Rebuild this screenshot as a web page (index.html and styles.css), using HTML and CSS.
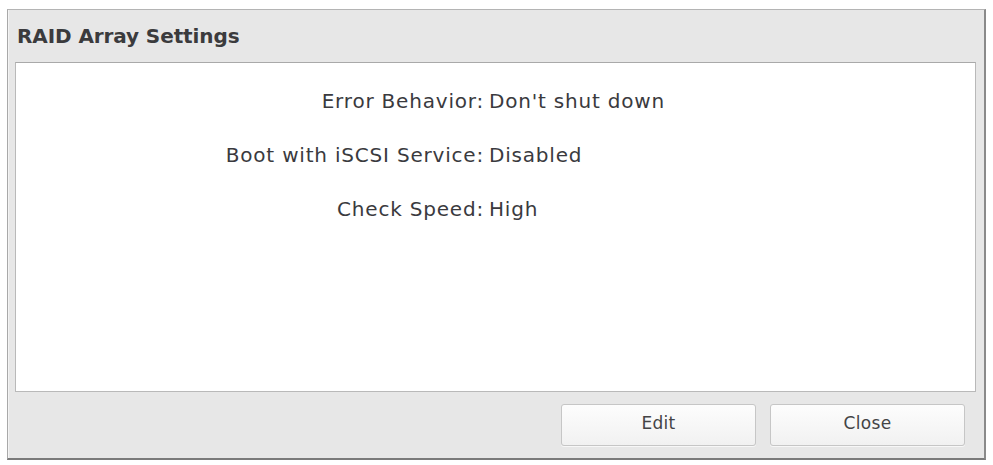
FILE: index.html
```html
<!DOCTYPE html>
<html lang="en">
<head>
<meta charset="utf-8">
<title>RAID Array Settings</title>
<link rel="stylesheet" href="styles.css">
</head>
<body>
<div class="dialog">
  <div class="title-bar">RAID Array Settings</div>
  <div class="panel">
    <div class="settings">
      <div class="label">Error Behavior:</div>
      <div class="value">Don't shut down</div>
      <div class="label">Boot with iSCSI Service:</div>
      <div class="value">Disabled</div>
      <div class="label">Check Speed:</div>
      <div class="value">High</div>
    </div>
  </div>
  <div class="footer">
    <button class="btn">Edit</button>
    <button class="btn">Close</button>
  </div>
</div>
</body>
</html>
```

FILE: styles.css
```css
html, body {
  margin: 0;
  padding: 0;
  background: #ffffff;
}

body {
  padding: 9px 7px 5px 7px;
  font-family: "DejaVu Sans", sans-serif;
  color: #3a3a3c;
}

.dialog {
  box-sizing: border-box;
  width: 979px;
  height: 451px;
  background: #e7e7e7;
  border-top: 1px solid #b4b4b4;
  border-left: 1px solid #a9a9a9;
  border-right: 2px solid #8a8a8a;
  border-bottom: 2px solid #7a7a7a;
  box-shadow: inset 1px 0 0 #f4f4f4;
  display: flex;
  flex-direction: column;
}

.title-bar {
  height: 52px;
  box-sizing: border-box;
  padding-left: 9px;
  padding-bottom: 1px;
  display: flex;
  align-items: center;
  font-weight: bold;
  font-size: 20px;
  letter-spacing: -0.1px;
  color: #3b3b3d;
}

.panel {
  box-sizing: border-box;
  height: 330px;
  margin: 0 8px 0 7px;
  background: #ffffff;
  border: 1px solid #b9b9b9;
  border-top-color: #a9a9a9;
}

.settings {
  display: grid;
  grid-template-columns: 468px auto;
  column-gap: 5px;
  row-gap: 31px;
  padding-top: 27px;
  font-size: 20px;
  line-height: 23px;
  letter-spacing: 0.8px;
  color: #3a3a3e;
}

.label {
  text-align: right;
}

.footer {
  flex: 1;
  display: flex;
  justify-content: flex-end;
  gap: 14px;
  padding: 12px 19px 0 0;
}

.btn {
  box-sizing: border-box;
  width: 195px;
  height: 42px;
  border: 1px solid #c6c6c6;
  border-radius: 3px;
  background: linear-gradient(#fdfdfd, #f1f1f1);
  box-shadow: 0 1px 0 #f7f7f7;
  font-family: "DejaVu Sans", sans-serif;
  font-size: 17px;
  letter-spacing: 0.3px;
  color: #444446;
  padding: 0 0 4px 0;
}
```
